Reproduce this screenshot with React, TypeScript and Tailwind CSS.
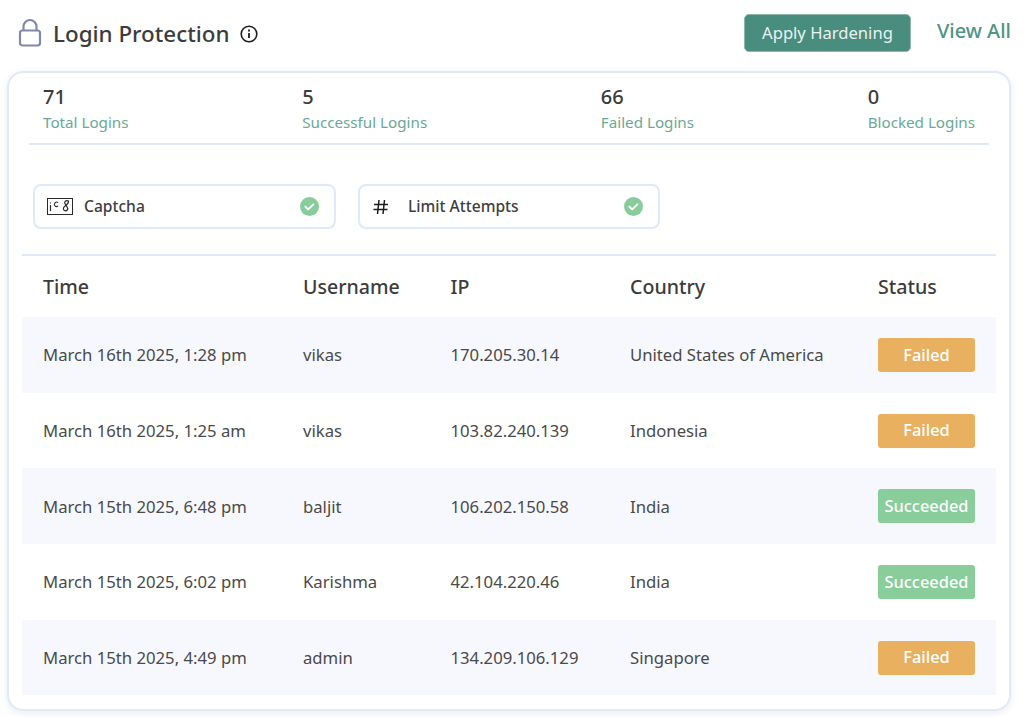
import React from "react";

const rows = [
  ["March 16th 2025, 1:28 pm", "vikas", "170.205.30.14", "United States of America", "Failed"],
  ["March 16th 2025, 1:25 am", "vikas", "103.82.240.139", "Indonesia", "Failed"],
  ["March 15th 2025, 6:48 pm", "baljit", "106.202.150.58", "India", "Succeeded"],
  ["March 15th 2025, 6:02 pm", "Karishma", "42.104.220.46", "India", "Succeeded"],
  ["March 15th 2025, 4:49 pm", "admin", "134.209.106.129", "Singapore", "Failed"],
];

const stats = [
  ["71", "Total Logins"],
  ["5", "Successful Logins"],
  ["66", "Failed Logins"],
  ["0", "Blocked Logins"],
];

function Check() {
  return (
    <svg width="19" height="19" viewBox="0 0 19 19" className="shrink-0">
      <circle cx="9.5" cy="9.5" r="9.5" fill="#86cd9b" />
      <path d="M5.5 9.8l2.7 2.6 5.2-5" fill="none" stroke="#fff" strokeWidth="2" strokeLinecap="round" strokeLinejoin="round" />
    </svg>
  );
}

function Chip({ icon, label, gap, width }: { icon: React.ReactNode; label: string; gap: string; width: string }) {
  return (
    <div className={`flex h-[45px] items-center rounded-lg border-2 border-[#e0e9f8] pl-[12px] pr-[15px] ${width}`}>
      {icon}
      <span className={`flex-1 text-[15.6px] font-medium text-[#404040] ${gap}`}>{label}</span>
      <Check />
    </div>
  );
}

export default function App() {
  return (
    <div className="h-[718px] w-[1024px] overflow-hidden bg-white pl-[7px] pr-[13px] font-['Noto_Sans','Open_Sans',sans-serif] text-[#404040]">
      <div className="flex h-[71px] items-center">
        <svg width="24" height="30" viewBox="0 0 24 30" className="ml-[11px] mt-[-5px]" fill="none" stroke="#8488a8" strokeWidth="2.2">
          <rect x="2" y="12.5" width="20" height="15" rx="2.5" />
          <path d="M5.5 12.5V8.5a6.5 6.5 0 0 1 13 0v4" />
        </svg>
        <h1 className="ml-[11px] mt-[-3px] text-[22.4px] font-medium leading-none text-[#3c3c3c]">Login Protection</h1>
        <svg width="18" height="18" viewBox="0 0 18 18" className="ml-[10px] mt-[-4px]" fill="none" stroke="#1c1c1c">
          <circle cx="9" cy="9" r="7.8" strokeWidth="1.6" />
          <path d="M9 8v5" strokeWidth="1.8" />
          <path d="M9 4.4v2" strokeWidth="1.8" />
        </svg>
        <button className="ml-auto mt-[-5px] flex h-[38px] w-[167px] items-center justify-center rounded-[5px] border border-[#8db5a9] bg-[#488d7e] text-[16.6px] text-[#e8f3f0]">
          Apply Hardening
        </button>
        <a className="ml-[26px] mt-[-9px] text-[20px] font-medium leading-none text-[#4f9484]">View All</a>
      </div>

      <div className="h-[640px] rounded-[16px] border-2 border-[#e0e9f8] shadow-[0_2px_6px_rgba(120,130,160,0.15)]">
        <div className="mx-[20px] flex h-[72px] justify-between border-b-2 border-[#e0e9f8] px-[14px] pt-[10px]">
          {stats.map(([n, l]) => (
            <div key={l}>
              <div className="text-[20px] font-medium leading-[28px] text-[#3c3c3c]">{n}</div>
              <div className="text-[15.2px] leading-[22px] text-[#6aa897]">{l}</div>
            </div>
          ))}
        </div>

        <div className="flex gap-[22px] pl-[24px] pt-[39px]">
          <Chip
            width="w-[303px]"
            gap="ml-[11px]"
            label="Captcha"
            icon={
              <svg width="26" height="17" viewBox="0 0 26 17" fill="none" stroke="#2a2a2a" className="shrink-0">
                <rect x="0.5" y="0.5" width="25" height="16" strokeWidth="1" />
                <path d="M3.5 7v6M3.5 4.4v1" strokeWidth="1.2" />
                <path d="M11 4.6a2.2 2.2 0 1 0 0 3.4" strokeWidth="1.1" />
                <path d="M21.5 3c-3-1.2-5 1-3 3.6l1.6 2.2c1.7 2.4-.6 5-2.9 3.4-1.7-1.3-.5-3.4 1.1-4.5 1.4-1 3.6-2.3 3.2-4.7z" strokeWidth="1.2" />
              </svg>
            }
          />
          <Chip
            width="w-[302px]"
            gap="ml-[19px]"
            label="Limit Attempts"
            icon={
              <svg width="16" height="16" viewBox="0 0 16 16" fill="none" stroke="#1c1c1c" strokeWidth="1.5" className="ml-[1px] shrink-0">
                <path d="M1 5.5h14M0.5 10.5h14M6 1L4.5 15M11.5 1L10 15" />
              </svg>
            }
          />
        </div>

        <div className="mx-[13px] mt-[25px] border-t-2 border-[#e0e9f8]">
          <div className="grid h-[61px] grid-cols-[260px_147.5px_179.5px_248px_1fr] items-center pl-[21px] pr-[21px] text-[19.6px] font-medium text-[#3c3c3c]">
            <div>Time</div>
            <div>Username</div>
            <div>IP</div>
            <div>Country</div>
            <div>Status</div>
          </div>
          {rows.map((r, i) => (
            <div
              key={r[0]}
              className={`grid h-[75.7px] grid-cols-[260px_147.5px_179.5px_248px_1fr] items-center pl-[21px] pr-[21px] text-[16.7px] text-[#4a4a4a] ${i % 2 === 0 ? "bg-[#f7f8fe]" : ""}`}
            >
              <div>{r[0]}</div>
              <div>{r[1]}</div>
              <div>{r[2]}</div>
              <div>{r[3]}</div>
              <div
                className={`flex h-[34px] items-center justify-center rounded-[3px] text-[16.4px] font-medium text-white ${r[4] === "Failed" ? "bg-[#e8b05f]" : "bg-[#88cd9a]"}`}
              >
                {r[4]}
              </div>
            </div>
          ))}
        </div>
      </div>
    </div>
  );
}
